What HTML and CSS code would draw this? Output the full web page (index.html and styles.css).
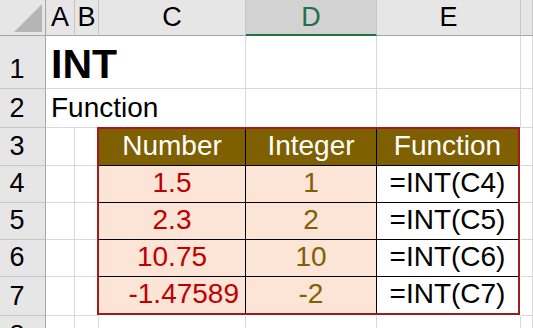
FILE: index.html
```html
<!DOCTYPE html>
<html lang="en">
<head>
  <meta charset="UTF-8">
  <title>INT function</title>
  <link rel="stylesheet" href="styles.css">
</head>
<body>
  <div class="sheet">
    <!-- column headers -->
    <div class="corner">
      <svg class="corner-mark" width="28" height="28" viewBox="0 0 28 28"><polygon points="28,0 28,28 0,28" fill="#b5b5b5"/></svg>
    </div>
    <div class="col-head">A</div>
    <div class="col-head">B</div>
    <div class="col-head">C</div>
    <div class="col-head col-head--active">D</div>
    <div class="col-head">E</div>
    <div class="col-head"></div>

    <div class="row-head">1</div>
    <div class="cell cell--title span-3">INT</div>
    <div class="cell"></div>
    <div class="cell"></div>
    <div class="cell"></div>

    <div class="row-head">2</div>
    <div class="cell cell--text span-3">Function</div>
    <div class="cell"></div>
    <div class="cell"></div>
    <div class="cell"></div>

    <div class="row-head">3</div>
    <div class="cell"></div>
    <div class="cell"></div>
    <div class="int-table">
      <div class="t-head">Number</div>
      <div class="t-head">Integer</div>
      <div class="t-head t-last">Function</div>

      <div class="t-num">1.5</div>
      <div class="t-int">1</div>
      <div class="t-fn t-last">=INT(C4)</div>

      <div class="t-num">2.3</div>
      <div class="t-int">2</div>
      <div class="t-fn t-last">=INT(C5)</div>

      <div class="t-num">10.75</div>
      <div class="t-int">10</div>
      <div class="t-fn t-last">=INT(C6)</div>

      <div class="t-num t-bottom t-right">-1.47589</div>
      <div class="t-int t-bottom">-2</div>
      <div class="t-fn t-bottom t-last">=INT(C7)</div>
    </div>
    <div class="cell"></div>

    <div class="row-head">4</div>
    <div class="cell"></div>
    <div class="cell"></div>
    <div class="cell"></div>

    <div class="row-head">5</div>
    <div class="cell"></div>
    <div class="cell"></div>
    <div class="cell"></div>

    <div class="row-head">6</div>
    <div class="cell"></div>
    <div class="cell"></div>
    <div class="cell"></div>

    <div class="row-head">7</div>
    <div class="cell"></div>
    <div class="cell"></div>
    <div class="cell"></div>

    <div class="row-head">8</div>
    <div class="cell"></div>
    <div class="cell"></div>
    <div class="cell"></div>
    <div class="cell"></div>
    <div class="cell"></div>
    <div class="cell"></div>
  </div>
</body>
</html>
```

FILE: styles.css
```css
html, body {
  margin: 0; padding: 0;
  background: #fff;
  overflow: hidden;
  font-family: "Liberation Sans", Arial, sans-serif;
  color: #000;
}
.sheet {
  display: grid;
  grid-template-columns: 46px 29px 24px 147px 131px 144px 1fr;
  grid-template-rows: 36px 53px 39px 38px 37px 37px 37px 39px 39px;
  width: 533px;
}

/* headers */
.corner {
  background: #e6e6e6;
  border-right: 1px solid #a6a6a6;
  border-bottom: 1px solid #a6a6a6;
  display: flex;
  align-items: flex-start;
  justify-content: flex-end;
}
.corner-mark { margin: 4px 3px 0 0; }
.col-head {
  background: #e6e6e6;
  border-right: 1px solid #c6c6c6;
  border-bottom: 1px solid #a6a6a6;
  font-size: 27px;
  line-height: 1;
  display: flex;
  align-items: flex-end;
  justify-content: center;
  padding-bottom: 4px;
}
.col-head--active {
  background: #d2d2d2;
  color: #217346;
  border-bottom: 2px solid #217346;
  padding-bottom: 3px;
}
.row-head {
  background: #e6e6e6;
  border-right: 1px solid #a6a6a6;
  border-bottom: 1px solid #c6c6c6;
  font-size: 27px;
  line-height: 1;
  display: flex;
  align-items: flex-end;
  justify-content: center;
  padding: 0 11px 5px 0;
}

/* plain cells */
.cell {
  border-right: 1px solid #d9d9d9;
  border-bottom: 1px solid #d9d9d9;
  display: flex;
  align-items: flex-end;
  line-height: 1;
  white-space: nowrap;
}
.span-3 { grid-column: span 3; }
.cell--title {
  font-size: 41px;
  font-weight: 700;
  padding: 0 0 3px 5px;
}
.cell--text {
  font-size: 28px;
  padding: 0 0 5px 5px;
}

/* the INT table */
.int-table {
  grid-column: span 3;
  grid-row: span 5;
  margin: -1px 1px 1px -2px;
  border: 2px solid #a01b1b;
  display: grid;
  grid-template-columns: 147px 131px 1fr;
  grid-template-rows: 37px 37px 37px 37px 1fr;
  font-size: 28px;
  line-height: 1;
  position: relative;
  z-index: 1;
}
.int-table > div {
  display: flex;
  align-items: flex-end;
  justify-content: center;
  padding-bottom: 5px;
  border-right: 1px solid #000;
  border-bottom: 1px solid #000;
  white-space: nowrap;
}
.int-table > .t-last { border-right: none; }
.int-table > .t-bottom { border-bottom: none; }
.t-head {
  background: #7f6000;
  color: #fff;
}
.t-num {
  background: #fce4d6;
  color: #c00000;
}
.int-table > .t-right {
  justify-content: flex-end;
  padding-right: 6px;
}
.t-int {
  background: #fce4d6;
  color: #806000;
}
.t-fn {
  background: #fff;
  color: #000;
}
```
